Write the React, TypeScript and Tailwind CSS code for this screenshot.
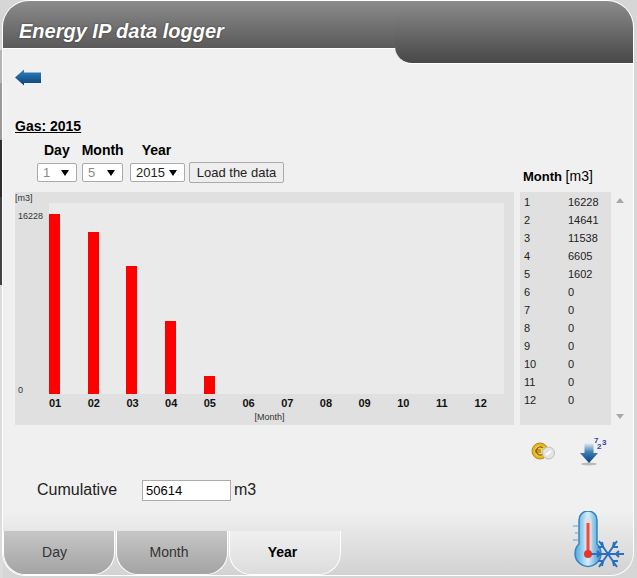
import React from 'react';

const MONTHS = [16228, 14641, 11538, 6605, 1602, 0, 0, 0, 0, 0, 0, 0];

const Dropdown = ({ value, width, muted }: { value: string; width: string; muted?: boolean }) => (
  <div className={`${width} h-[19px] flex items-center justify-between bg-white border border-[#ababab] rounded-[2px] pl-[5px] pr-[7px] text-[13px] ${muted ? 'text-[#8a8a8a]' : 'text-[#222]'}`}>
    <span>{value}</span>
    <span className="w-0 h-0 border-x-[4px] border-x-transparent border-t-[6px] border-t-black" />
  </div>
);

const BackArrow = () => (
  <svg width="27" height="17" viewBox="0 0 27 17">
    <defs>
      <linearGradient id="back" x1="0" y1="0" x2="0" y2="1">
        <stop offset="0" stopColor="#2f86c4" />
        <stop offset="1" stopColor="#0c3f73" />
      </linearGradient>
    </defs>
    <path d="M0 8.5 L9 0.5 V3.5 H26 V14 H9 V16.5 Z" fill="url(#back)" />
  </svg>
);

const Coins = () => (
  <svg width="26" height="20" viewBox="0 0 26 20">
    <circle cx="10" cy="10" r="8" fill="#e6b422" stroke="#b98a10" />
    <circle cx="10" cy="10" r="5.5" fill="#f4d35e" />
    <path d="M13 7 a4 4 0 1 0 0 6 M5 9 H11 M5 11 H11" fill="none" stroke="#8a6208" strokeWidth="1.2" />
    <circle cx="18.5" cy="12" r="6" fill="#e4e4e4" stroke="#bdbdbd" />
    <path d="M16 14 L21 10" stroke="#fff" strokeWidth="2" />
  </svg>
);

const DownloadDigits = () => (
  <svg width="28" height="30" viewBox="0 0 28 30">
    <defs>
      <linearGradient id="down" x1="0" y1="0" x2="0" y2="1">
        <stop offset="0" stopColor="#e8eef4" />
        <stop offset="0.45" stopColor="#3f7fb8" />
        <stop offset="1" stopColor="#0b3f7c" />
      </linearGradient>
    </defs>
    <ellipse cx="10" cy="28" rx="8" ry="1.5" fill="#bbb" />
    <path d="M5.5 7 H14.5 V17 H19 L10 27 L1 17 H5.5 Z" fill="url(#down)" />
    <text x="15" y="7" fontSize="8" fontWeight="700" fill="#3b3f9e" fontFamily="Liberation Sans">7</text>
    <text x="18" y="13" fontSize="8" fontWeight="700" fill="#3b3f9e" fontFamily="Liberation Sans">2</text>
    <text x="23" y="9" fontSize="8" fontWeight="700" fill="#3b3f9e" fontFamily="Liberation Sans">3</text>
  </svg>
);

const Thermometer = () => (
  <svg width="54" height="58" viewBox="0 0 54 58">
    <defs>
      <linearGradient id="glass" x1="0" y1="0" x2="1" y2="0">
        <stop offset="0" stopColor="#4fa6dc" />
        <stop offset="0.5" stopColor="#d8eefa" />
        <stop offset="1" stopColor="#3f93cc" />
      </linearGradient>
    </defs>
    <path d="M7 9 a9 9 0 0 1 18 0 V33 a13 13 0 1 1 -18 0 Z" fill="url(#glass)" stroke="#2f86c0" strokeWidth="1.5" />
    <rect x="12.5" y="6" width="7" height="36" rx="3.5" fill="#d9dfe4" />
    <rect x="14.5" y="12" width="3" height="30" fill="#f04a3e" />
    <circle cx="16" cy="43" r="4" fill="#f0332a" />
    <path d="M1 15 H7 M3 22 H7 M1 29 H7" stroke="#5aa5d6" strokeWidth="1" />
    <g stroke="#2a6fc0" strokeWidth="2" fill="none">
      <path d="M19 43 H52 M27 30 L45 56 M45 30 L27 56" />
      <path d="M25 40 L28 43 L25 46 M47 40 L44 43 L47 46 M30 31 L31 36 L26 36 M42 31 L41 36 L46 36 M30 55 L31 50 L26 50 M42 55 L41 50 L46 50" />
    </g>
  </svg>
);

const Tab = ({ label, active, inset }: { label: string; active?: boolean; inset: string }) => (
  <div
    className={`w-[112px] h-full flex items-center justify-center rounded-b-[22px] text-[14px] border-b border-x border-white ${inset} ${
      active
        ? 'font-bold text-black bg-gradient-to-b from-[#f0f0f0] to-[#dcdcdc]'
        : 'text-[#333] bg-gradient-to-b from-[#c6c6c6] to-[#a4a4a4] border-t-0'
    }`}
  >
    {label}
  </div>
);

export default function App() {
  const max = MONTHS[0];

  return (
    <div className="w-[637px] h-[578px] flex overflow-hidden bg-[#d6d6d6] font-['Liberation_Sans',Arial,sans-serif] text-black">
      {/* left edge, bits of the page behind the window */}
      <div className="w-[3px] shrink-0 flex flex-col">
        <div className="h-[50px] bg-[#d6d6d6]" />
        <div className="h-[33px] bg-[#b4b4b4]" />
        <div className="h-[57px] bg-[#9a9a9a]" />
        <div className="h-[57px] bg-[#2e2e2e]" />
        <div className="h-[88px] bg-[#444]" />
        <div className="flex-1 bg-[#dcdcdc]" />
      </div>

      <div className="w-[630px] h-[574px] mt-[1px] flex flex-col rounded-t-[26px] rounded-br-[22px] rounded-bl-[22px] overflow-hidden bg-[#f0f0f0] shadow-[0_0_0_1px_#fff]">
        {/* header */}
        <header className="h-[63px] shrink-0 flex items-start">
          <div className="w-[392px] h-[48px] flex items-center pl-[16px] pt-[12px] bg-gradient-to-b from-[#8c8c8c] to-[#5a5a5a] border-b border-white">
            <h1 className="text-[20px] leading-none font-bold italic text-white [text-shadow:0_0_2px_#333]">Energy IP data logger</h1>
          </div>
          <div className="flex-1 h-full rounded-bl-[17px] bg-gradient-to-b from-[#8c8c8c] to-[#484848] border-b border-white" />
        </header>

        <main className="flex-1 flex flex-col pl-[12px]">
          <div className="h-[22px] flex items-end"><BackArrow /></div>
          <h2 className="mt-[32px] text-[14px] leading-[16px] font-bold underline">Gas: 2015</h2>

          <div className="flex items-end">
            <div className="w-[505px] shrink-0">
              <div className="mt-[8px] h-[16px] flex text-[14px] font-bold leading-[16px]">
                <span className="ml-[29px]">Day</span>
                <span className="ml-[12px]">Month</span>
                <span className="ml-[18px]">Year</span>
              </div>
              <div className="mt-[4px] flex items-center gap-[7px] pl-[22px]">
                <Dropdown value="1" width="w-[40px]" muted />
                <div className="-ml-[2px]"><Dropdown value="5" width="w-[41px]" muted /></div>
                <Dropdown value="2015" width="w-[55px]" />
                <button className="-ml-[3px] w-[95px] h-[21px] bg-[#eeeeee] border border-[#ababab] rounded-[2px] text-[13px] leading-none text-[#222]">Load the data</button>
              </div>
            </div>
            <div className="ml-[3px] mb-[-2px] text-[13px] leading-[16px] font-bold whitespace-nowrap">Month <span className="font-normal text-[14px]">[m3]</span></div>
          </div>

          <div className="mt-[9px] flex">
            {/* chart */}
            <section className="w-[499px] h-[233px] shrink-0 bg-[#e0e0e0] flex flex-col text-[9px] leading-[11px]">
              <div className="h-[11px] pt-[1px] text-[#333]">[m3]</div>
              <div className="h-[191px] flex">
                <div className="w-[34px] flex flex-col justify-between pl-[3px] pt-[8px] text-[9px] text-[#333]">
                  <span>16228</span>
                  <span className="translate-y-[2px]">0</span>
                </div>
                <div className="w-[455px] bg-[#eaeaea] grid grid-cols-[repeat(11,38.7px)_29px] items-end">
                  {MONTHS.map((v, i) => (
                    <div key={i} className="w-[11px] bg-[#ff0000]" style={{ height: `${(v / max) * 180}px` }} />
                  ))}
                </div>
              </div>
              <div className="ml-[34px] mt-[3px] w-[455px] grid grid-cols-[repeat(11,38.7px)_29px] text-[11px] leading-[13px] font-bold text-[#111]">
                {MONTHS.map((_, i) => (
                  <span key={i} className="w-[12px] text-center">{String(i + 1).padStart(2, '0')}</span>
                ))}
              </div>
              <div className="mt-[2px] text-center pl-[10px] text-[#333]">[Month]</div>
            </section>

            {/* table */}
            <section className="ml-[6px] w-[91px] h-[233px] bg-[#e0e0e0] pt-[1px] text-[11px] leading-[18px] text-[#222]">
              {MONTHS.map((v, i) => (
                <div key={i} className="flex h-[18px]">
                  <span className="w-[48px] pl-[4px]">{i + 1}</span>
                  <span>{v}</span>
                </div>
              ))}
            </section>

            <div className="ml-[4px] w-[10px] flex flex-col justify-between items-center py-[6px]">
              <span className="w-0 h-0 border-x-[4px] border-x-transparent border-b-[5px] border-b-[#a8a8a8]" />
              <span className="w-0 h-0 border-x-[4px] border-x-transparent border-t-[5px] border-t-[#a8a8a8]" />
            </div>
          </div>

          <div className="mt-[9px] h-[33px] flex items-center pl-[515px] gap-[23px]">
            <Coins />
            <DownloadDigits />
          </div>

          <div className="mt-[11px] flex items-center text-[16px] text-[#222] pl-[22px]">
            <span className="w-[105px]">Cumulative</span>
            <input readOnly value="50614" className="w-[89px] h-[21px] bg-white border border-[#ababab] px-[3px] text-[13px] text-black" />
            <span className="ml-[3px]">m3</span>
          </div>
        </main>

        {/* footer tabs */}
        <footer className="mt-auto h-[64px] shrink-0 flex flex-col bg-gradient-to-b from-[#f0f0f0] to-[#d2d2d2]">
          <div className="h-[20px]" />
          <div className="flex-1 flex items-stretch justify-between pr-[7px]">
            <nav className="flex gap-[1px]">
              <Tab label="Day" inset="pr-[9px]" />
              <Tab label="Month" inset="pr-[6px]" />
              <Tab label="Year" active inset="pr-[5px]" />
            </nav>
            <div className="-mt-[20px]"><Thermometer /></div>
          </div>
        </footer>
      </div>

      <div className="flex-1" />
    </div>
  );
}
